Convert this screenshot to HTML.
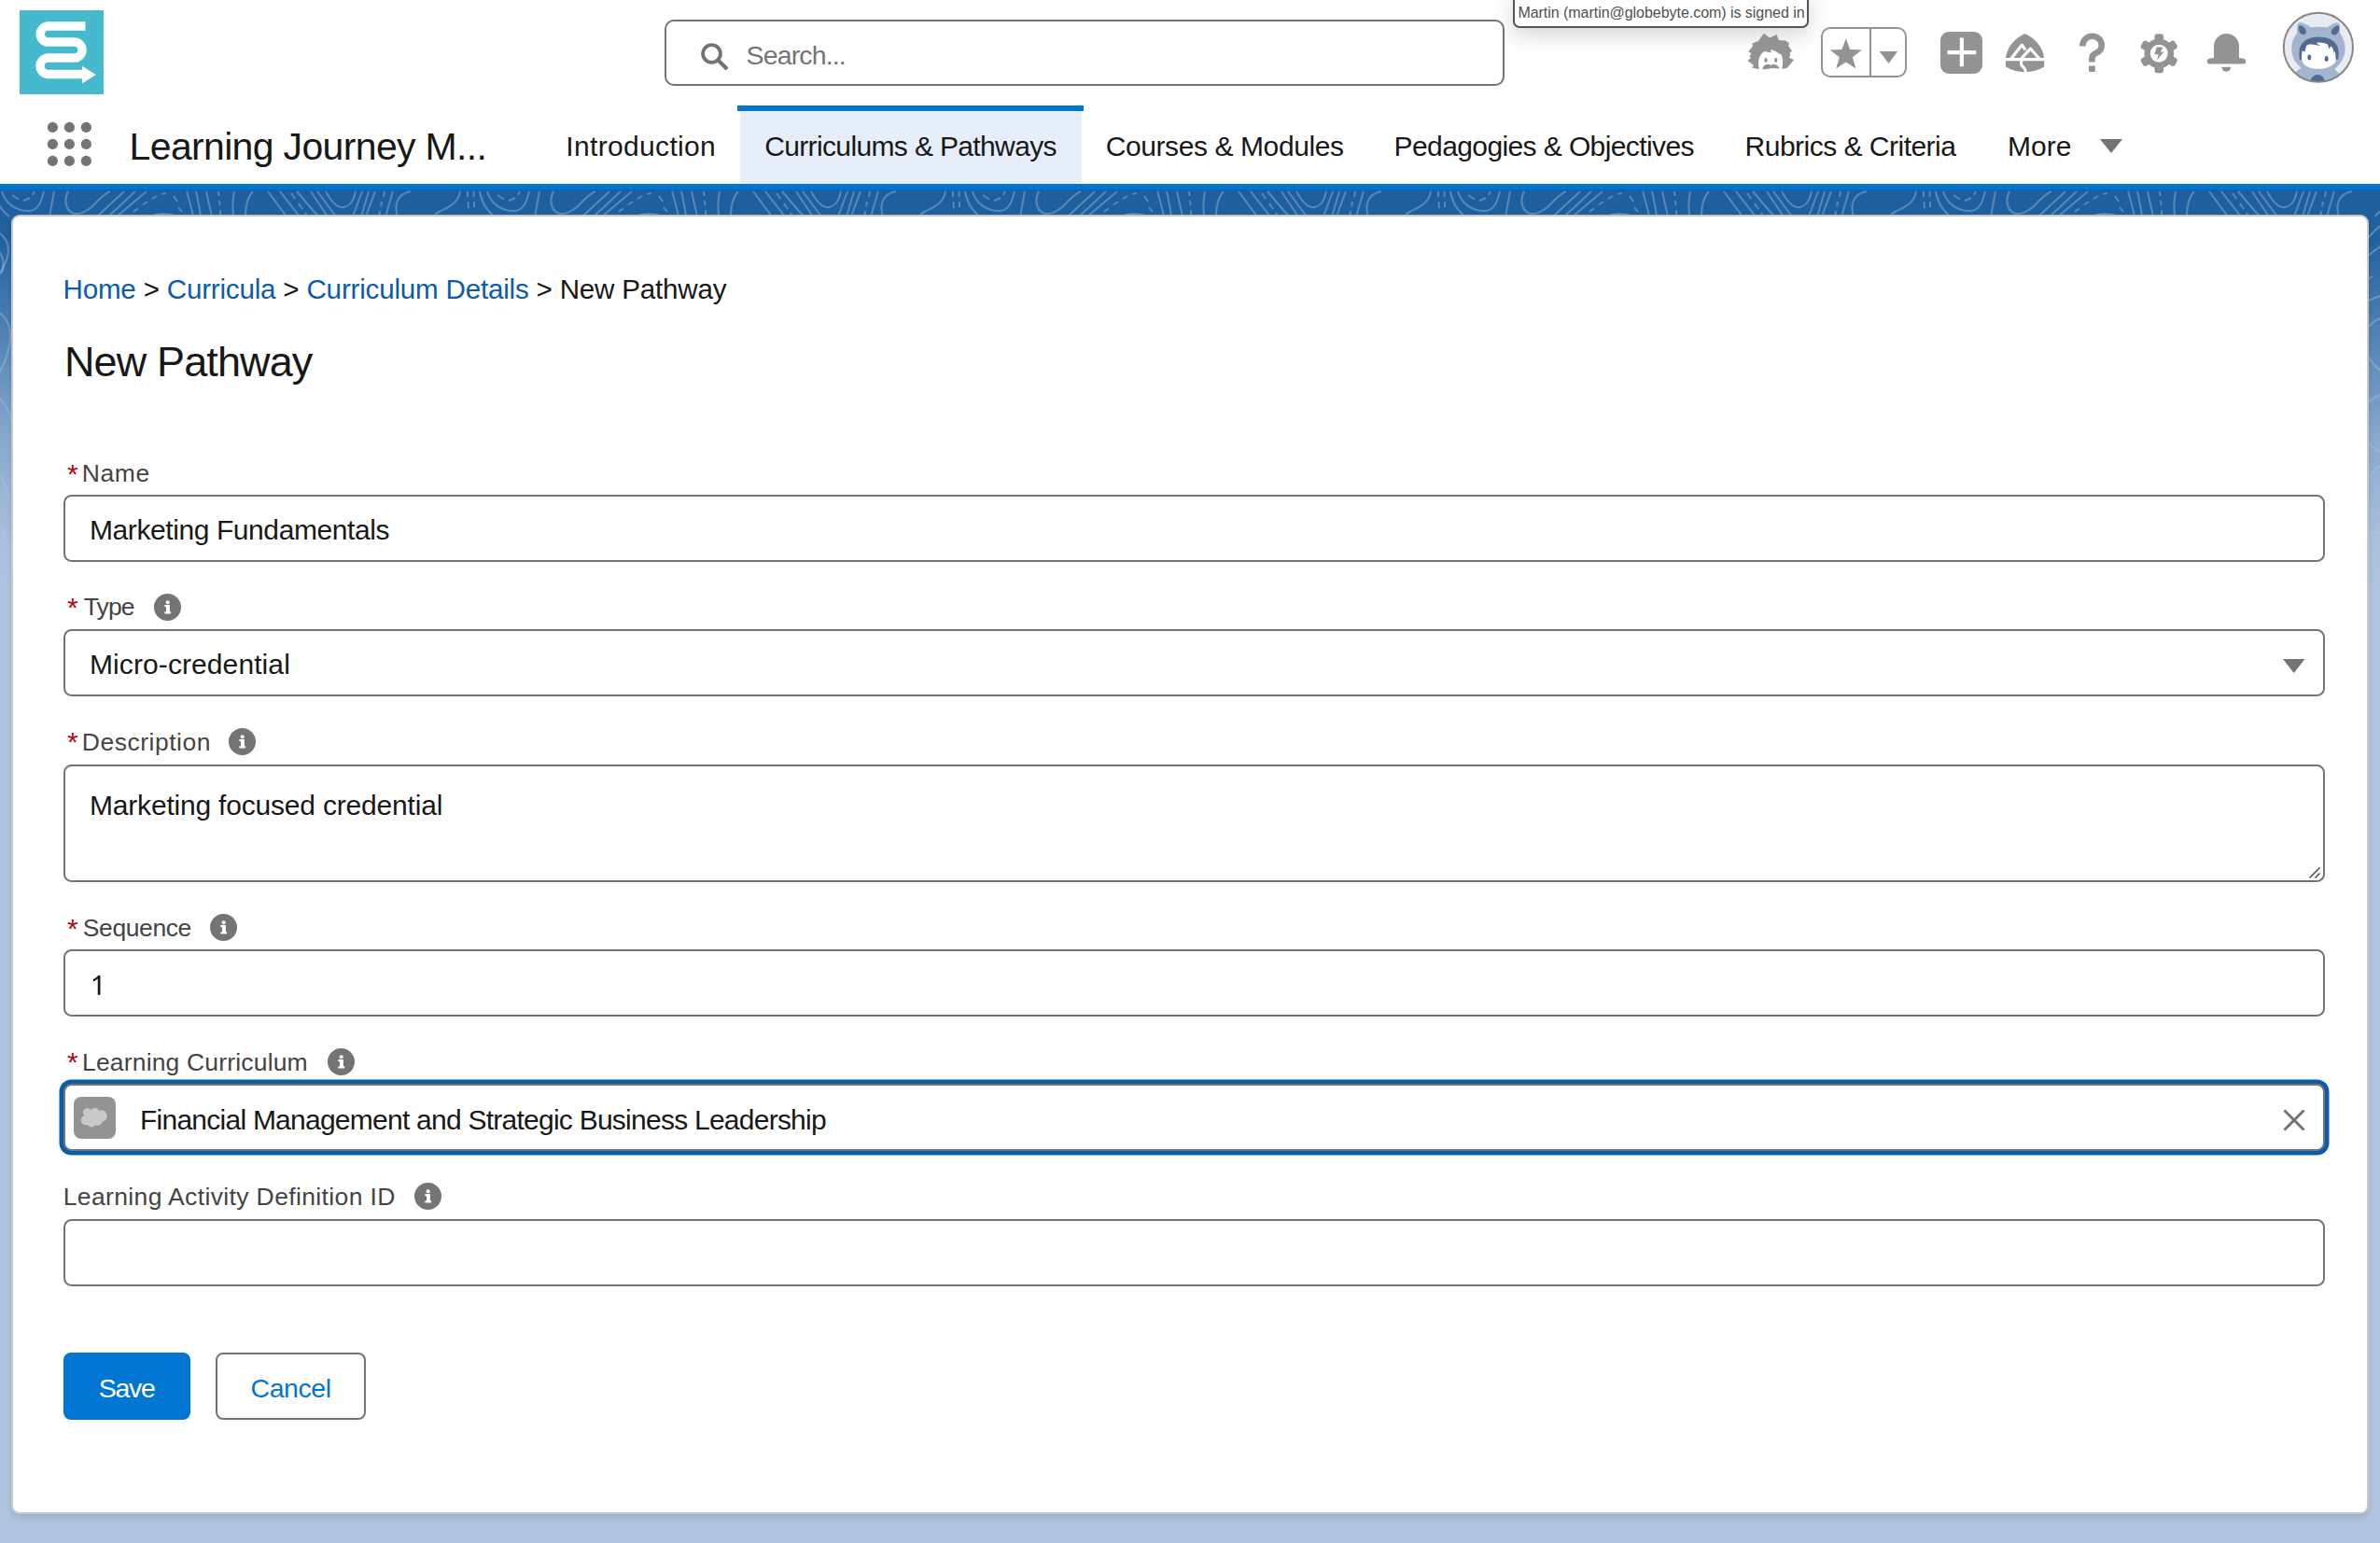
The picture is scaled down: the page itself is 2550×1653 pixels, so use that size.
<!DOCTYPE html>
<html><head><meta charset="utf-8">
<style>
html,body{margin:0;padding:0;width:2550px;height:1653px;overflow:hidden;background:#b0c4df;font-family:"Liberation Sans",sans-serif;position:relative}
.a{position:absolute}
.t{position:absolute;white-space:nowrap;line-height:1}
.lbl{font-size:26.8px;color:#444444}
.req{color:#ba0517;font-size:30px}
.val{font-size:29.3px;color:#181818}
.inp{position:absolute;left:68px;width:2423px;box-sizing:border-box;border:2px solid #747474;border-radius:8.5px;background:#fff}
.tab{font-size:29px;color:#181818}
.info{position:absolute;width:29px;height:29px;border-radius:50%;background:#747474}
.info svg{position:absolute;left:0;top:0}
</style></head><body>
<!-- background band -->
<div class="a" style="left:0;top:203px;width:2550px;height:437px;background:#1d5e9e"></div>
<svg class="a" style="left:0;top:0" width="2550" height="640" viewBox="0 0 2550 640">
<defs>
<pattern id="topo" x="0" y="0" width="520" height="640" patternUnits="userSpaceOnUse">
<g fill="none" stroke="#fff" stroke-opacity="0.26" stroke-width="2">
<path d="M2 205C6 220 20 226 30 226C40 226 44 218 47 205"/>
<path d="M-6 205C-4 218 2 226 10 232M514 205C516 218 522 226 530 232"/>
<path d="M13 209L20 213.5M25 215L32 212M35 209L37 205" />
<path d="M58 205C56 215 55 222 53 232"/>
<path d="M73 205C68 215 70 228 82 229C92 229 100 220 105 215C110 210 115 206 118 205"/>
<path d="M133 205L104 232M145 205L116 232M157 205L125 232"/>
<path d="M143 227L148 223M153 219L158 216M163 213L168 210M173 208L178 207M186 210L190 216M191 222L195 227"/>
<path d="M160 232C170 228 180 228 190 232"/>
<path d="M200 205C203 215 205 222 207 232M210 205C212 215 214 222 215 232M221 205C223 215 225 222 227 232"/>
<path d="M234 205L234.5 210M235 215L235.5 220M236 225L236.5 232" />
<path d="M251 205C249 215 249 222 250 232"/>
<path d="M271 205C264 212 263 222 263 232"/>
<path d="M287 205L307 232M300 205L321 232M318 205L341 232M333 205L351 232M340 205L360 232"/>
<path d="M312 207L316 213M320 218L324 224M327 228L329 232"/>
<path d="M349 205C356 218 362 222 367 222C374 222 379 215 381 205"/>
<path d="M388 205L378 232M395 205L387 232M402 205L392 232M421 205L413 232"/>
<path d="M412 205L411 211M409 216L408 221M407 226L406 232"/>
<path d="M440 205C425 208 422 220 426 232"/>
<path d="M493 205C491 218 480 222 472 226C468 228 466 229 465 232"/>
<path d="M501 205V211M501.5 216L502 223M507.6 205V211M508 216V222"/>
<!-- lower region for side strips -->
<path d="M-10 245C5 250 12 262 8 275C4 290 -5 300 -10 310"/>
<path d="M-10 262C2 268 6 280 2 292"/>
<path d="M-10 330C6 335 14 350 10 370C6 390 0 400 -10 410"/>
<path d="M-10 420C4 428 12 440 14 460"/>
<path d="M452 540C462 548 472 552 485 555M452 575C465 570 475 568 485 570M-10 500C2 510 8 520 10 540M-10 560C4 565 10 575 12 600M452 600C460 608 470 612 485 615M-10 610C2 615 8 625 14 640"/>
<path d="M452 262C460 250 470 240 485 232M452 278C462 270 472 262 480 258M455 300L462 296M452 325C465 318 475 315 485 312M452 360C458 345 470 338 485 340M452 372C462 392 470 400 485 402M450 440C460 425 472 420 485 420M452 470C462 480 470 486 485 488M455 520C460 505 470 495 485 492"/>
</g>
</pattern>
<linearGradient id="fade" x1="0" y1="203" x2="0" y2="640" gradientUnits="userSpaceOnUse">
<stop offset="0" stop-color="#b0c4df" stop-opacity="0"/>
<stop offset="0.12" stop-color="#b0c4df" stop-opacity="0.03"/>
<stop offset="0.35" stop-color="#b0c4df" stop-opacity="0.35"/>
<stop offset="0.6" stop-color="#b0c4df" stop-opacity="0.72"/>
<stop offset="0.85" stop-color="#b0c4df" stop-opacity="0.95"/>
<stop offset="1" stop-color="#b0c4df" stop-opacity="1"/>
</linearGradient>
</defs>
<rect x="0" y="203" width="2550" height="437" fill="url(#topo)"/>
<rect x="0" y="203" width="2550" height="437" fill="url(#fade)"/>
</svg>
<!-- header white -->
<div class="a" style="left:0;top:0;width:2550px;height:197px;background:#fff"></div>
<div class="a" style="left:0;top:197px;width:2550px;height:6px;background:#0176d3"></div>

<!-- card -->
<div class="a" style="left:12px;top:230px;width:2526px;height:1392px;box-sizing:border-box;background:#fff;border:2px solid #c9c9c9;border-radius:9px;box-shadow:0 4px 6px rgba(0,0,0,0.10)"></div>


<!-- ===== HEADER ===== -->
<svg class="a" style="left:21px;top:11px" width="90" height="90" viewBox="0 0 90 90">
<rect width="90" height="90" fill="#45b9cd"/>
<path d="M70.5 17.1H30.75A8.5 8.5 0 0 0 30.75 34.1H58.5A8.5 8.5 0 0 1 58.5 51.1H30.75A8.7 8.7 0 0 0 30.75 68.5H68" fill="none" stroke="#fff" stroke-width="9.5"/>
<path d="M67 59.7L81.8 69.1L67 78.5Z" fill="#fff"/>
</svg>

<div class="a" style="left:712px;top:21px;width:899.5px;height:70.6px;box-sizing:border-box;border:2px solid #747474;border-radius:10px;background:#fff"></div>
<svg class="a" style="left:748px;top:43px" width="36" height="36" viewBox="0 0 36 36">
<circle cx="14.5" cy="14.5" r="9.4" fill="none" stroke="#747474" stroke-width="3.8"/>
<path d="M21 21L31 31" stroke="#747474" stroke-width="4.2" stroke-linecap="butt"/>
</svg>
<div class="t" style="left:799.6px;top:44.9px;font-size:28.5px;letter-spacing:-0.875px;color:#747474">Search...</div>


<!-- tooltip -->
<div class="a" style="left:1621px;top:-12px;width:317px;height:42px;box-sizing:border-box;border:2px solid #555;border-radius:7px;background:#fff;box-shadow:0 8px 22px rgba(0,0,0,0.16)"></div>
<div class="t" style="left:1626.4px;top:5.9px;font-size:16px;letter-spacing:-0.039px;color:#505050">Martin (martin@globebyte.com) is signed in</div>

<!-- einstein -->
<svg class="a" style="left:1870px;top:34px" width="54" height="44" viewBox="0 0 54 44">
<path fill="#939393" d="M14 40L7 38.5L9 36L2.4 31L6 28L4.4 26.5L6.5 23L3.2 21.3L8 15.5L7.2 12.6L14 10L16 7L19.9 1.8L26 6.5L33.5 3L36 9L43 9.5L47 12.2L46 15L49.9 20.5L47.5 23L48.3 24.5L47 28L51.9 30.1L48 35L44.3 38.9L39.1 39.7Z"/>
<path fill="#fff" d="M14.8 40.5C13.5 34 14 28 16.7 24.4C18 22.5 19.5 21.5 20.4 21L22.3 21.6L27.9 22.6L26.9 19.2C30 19.5 34 21.5 36.9 24.1L38.1 23.8C40 27 41 32 39.1 40.5Z"/>
<ellipse cx="22" cy="30.5" rx="1.6" ry="2.4" fill="#939393"/>
<ellipse cx="32.7" cy="30.5" rx="1.6" ry="2.4" fill="#939393"/>
<path fill="#939393" d="M18.5 40.3C18.5 37 21 34.8 24.4 34.7C25.8 34.7 26.8 35.5 27.6 36C28.4 35.3 29 34.7 30.5 34.7C33.5 34.8 36 37 36.3 39.7C33.5 39.3 30.5 38.8 27.6 39.2C24.5 39.6 21.5 40.5 18.5 40.3Z"/>
</svg>

<!-- favorites -->
<div class="a" style="left:1951px;top:29px;width:92px;height:54px;box-sizing:border-box;border:2px solid #939393;border-radius:10px"></div>
<div class="a" style="left:2003px;top:29px;width:2px;height:54px;background:#939393"></div>
<svg class="a" style="left:1955px;top:35px" width="46" height="46" viewBox="0 0 46 46">
<path fill="#939393" d="M22.8 6L27.1 17.9L39.9 18.4L29.8 26.3L33.4 38.6L22.8 31.5L12.2 38.6L15.8 26.3L5.7 18.4L18.5 17.9Z"/>
</svg>
<svg class="a" style="left:2010px;top:52px" width="26" height="20" viewBox="0 0 26 20"><path d="M3.7 3H23.2L13.5 16Z" fill="#939393"/></svg>

<!-- plus -->
<svg class="a" style="left:2079px;top:34px" width="45" height="45" viewBox="0 0 45 45">
<rect width="45" height="45" rx="9" fill="#939393"/>
<path d="M22.9 6.5V37.2M7.6 22.1H38.2" stroke="#fff" stroke-width="4.2"/>
</svg>

<!-- trailhead -->
<svg class="a" style="left:2149px;top:36px" width="42" height="42" viewBox="0 0 42 42">
<path fill="#939393" d="M20.6 0C8 6 1.5 15 0 26H41.2C39.6 15 33 6 20.6 0Z"/>
<path fill="#939393" d="M0 29.3H41.2V35.5C35 39.3 28 41.2 20.6 41.2C13 41.2 6 39.3 0 35.5Z"/>
<path fill="none" stroke="#fff" stroke-width="3.2" stroke-linejoin="round" d="M6 26.5L17.4 12.3L21.3 17.6M16.8 26.5L26.5 16.2L35.8 26.5"/>
<path fill="none" stroke="#fff" stroke-width="3" d="M17.5 28.5C15.5 31.5 16.5 34 19 36C21 37.5 21.6 39 21 42"/>
</svg>

<!-- help -->
<svg class="a" style="left:2225px;top:33px" width="34" height="48" viewBox="0 0 34 48">
<path fill="none" stroke="#939393" stroke-width="6.6" d="M6.3 16.5C6.3 10 11 5.8 16.5 5.8C22.5 5.8 26.8 10 26.8 15.5C26.8 20 24 22.5 20.5 24C17.5 25.3 16.4 27.5 16.4 30V33.6"/>
<rect x="13" y="37.4" width="6.8" height="6.7" rx="1" fill="#939393"/>
</svg>

<!-- gear -->
<svg class="a" style="left:2292px;top:36px" width="42" height="44" viewBox="0 0 42 44">
<g transform="translate(21.25 21.25)" fill="#939393">
<circle r="15.8"/>
<rect x="-4.8" y="-21" width="9.6" height="10" rx="3.2"/>
<rect x="-4.8" y="-21" width="9.6" height="10" rx="3.2" transform="rotate(60)"/>
<rect x="-4.8" y="-21" width="9.6" height="10" rx="3.2" transform="rotate(120)"/>
<rect x="-4.8" y="-21" width="9.6" height="10" rx="3.2" transform="rotate(180)"/>
<rect x="-4.8" y="-21" width="9.6" height="10" rx="3.2" transform="rotate(240)"/>
<rect x="-4.8" y="-21" width="9.6" height="10" rx="3.2" transform="rotate(300)"/>
<circle r="9.4" fill="#fff"/>
<path d="M-2.5 -6.8H4.2L1.6 -1.8H5.2L-2.2 7.2L-0.6 0.9H-5Z"/>
</g>
</svg>

<!-- bell -->
<svg class="a" style="left:2362px;top:33px" width="48" height="48" viewBox="0 0 48 48">
<g transform="translate(-2362 -33)" fill="#939393">
<path d="M2372 62V49.5A13.5 13.5 0 0 1 2399 49.5V62C2399.5 62.2 2401 62.4 2403 62.6C2405.4 62.9 2406.3 64.3 2406.3 65.6C2406.3 67.6 2405.5 68.5 2404 68.5H2367C2365.5 68.5 2364.8 67.6 2364.8 65.6C2364.8 64.3 2365.6 62.9 2368 62.6C2370 62.4 2371.5 62.2 2372 62Z"/>
<path d="M2380.4 71.7H2390.2A4.9 5 0 0 1 2380.4 71.7Z"/>
</g>
</svg>

<!-- avatar -->
<svg class="a" style="left:2444px;top:11px" width="80" height="80" viewBox="2444 11 80 80">
<defs><clipPath id="avc"><circle cx="2483.9" cy="50.75" r="37"/></clipPath></defs>
<circle cx="2483.9" cy="50.75" r="37.2" fill="#e8ecf2"/>
<g clip-path="url(#avc)">
<path fill="#a3b4cf" d="M2465.6 72.7C2458.5 67 2455.3 60 2455.3 52.6C2455.3 45.5 2457.5 40 2461.2 35.5C2461 31 2461 27.5 2462 25.5C2463 24 2465 23.8 2467 24.6C2470 25.8 2473 27.5 2475.7 29.2C2481.5 28.5 2487.5 28.5 2493.5 29.2C2496 27.5 2499.5 25.5 2502.5 24.6C2504.5 24 2506.2 24.5 2506.7 26.5C2507.2 29 2507.2 32 2506.9 35C2510.5 40 2512.7 46 2512.7 52.6C2512.7 60.5 2508.5 68.5 2501.3 74L2506 78.8L2514 91H2453L2459.8 77.1Z"/>
<path fill="#536b90" d="M2463.4 27.5C2465.5 26.5 2468.5 28.5 2470.2 31.5C2471.5 34 2470.8 36.5 2468.5 37C2465.5 37.5 2463.5 35 2463 32C2462.7 30 2462.8 28.2 2463.4 27.5Z"/>
<path fill="#536b90" d="M2505.6 27.8C2503.5 26.8 2500.5 28.8 2498.5 31.8C2497 34.5 2497.8 37 2500.3 37.4C2503.5 37.8 2505.5 35.3 2506 32.3C2506.3 30.2 2506.2 28.5 2505.6 27.8Z"/>
<path fill="#536b90" d="M2464 64.3C2463.2 60 2463.2 55.5 2464 51.5C2466.5 43.5 2474.5 39.5 2484.6 39.5C2494.5 39.5 2502.5 43.5 2505 51.5C2506 55.5 2505.8 60 2505 63.7Z"/>
<path fill="#fff" d="M2466.5 65.4C2465.8 62 2465.8 58.5 2466.8 54.3L2469.5 55.5L2471 49L2474 47.5C2477 47.3 2480 47.8 2483 48.5C2484.5 48.8 2485.8 49 2485.7 48.6C2484 47.5 2482.5 46.5 2481.8 45.9C2485 45 2490 45.5 2494 47.5L2495.3 52.4L2497.4 49.3C2499.5 51 2500.5 54 2500.6 57.2L2501.5 54.5C2502.5 57.5 2503 61.5 2502.4 66C2500 70.5 2493 73.8 2484 73.8C2475 73.8 2468.5 70.5 2466.5 65.4Z"/>
<ellipse cx="2474.3" cy="61.5" rx="1.95" ry="2.9" fill="#536b90"/>
<ellipse cx="2492.7" cy="62.9" rx="1.95" ry="2.9" fill="#536b90"/>
<circle cx="2483.2" cy="87.6" r="7.6" fill="#536b90"/>
</g>
<circle cx="2483.9" cy="50.75" r="37.1" fill="none" stroke="#868686" stroke-width="2"/>
</svg>

<!-- ===== NAV ===== -->
<svg class="a" style="left:45px;top:125px" width="60" height="60" viewBox="0 0 60 60">
<g fill="#747474">
<circle cx="11.4" cy="11.4" r="5.6"/><circle cx="29.4" cy="11.4" r="5.6"/><circle cx="47.4" cy="11.4" r="5.6"/>
<circle cx="11.4" cy="29.4" r="5.6"/><circle cx="29.4" cy="29.4" r="5.6"/><circle cx="47.4" cy="29.4" r="5.6"/>
<circle cx="11.4" cy="47.4" r="5.6"/><circle cx="29.4" cy="47.4" r="5.6"/><circle cx="47.4" cy="47.4" r="5.6"/>
</g></svg>
<div class="t" style="left:138.6px;top:137.0px;font-size:41px;letter-spacing:-0.66px;color:#181818">Learning Journey M...</div>

<div class="a" style="left:793px;top:119px;width:366px;height:78px;background:#e5eef9"></div>
<div class="a" style="left:790px;top:113px;width:371px;height:6px;background:#0176d3"></div>
<div class="t" style="left:606.3px;top:142.0px;font-size:30px;letter-spacing:0.336px;color:#181818">Introduction</div>
<div class="t" style="left:819.2px;top:142.0px;font-size:30px;letter-spacing:-0.638px;color:#181818">Curriculums &amp; Pathways</div>
<div class="t" style="left:1184.7px;top:142.0px;font-size:30px;letter-spacing:-0.406px;color:#181818">Courses &amp; Modules</div>
<div class="t" style="left:1493.6px;top:142.0px;font-size:30px;letter-spacing:-0.605px;color:#181818">Pedagogies &amp; Objectives</div>
<div class="t" style="left:1869.6px;top:142.0px;font-size:30px;letter-spacing:-0.512px;color:#181818">Rubrics &amp; Criteria</div>
<div class="t" style="left:2150.9px;top:142.0px;font-size:30px;letter-spacing:0.067px;color:#181818">More</div>
<svg class="a" style="left:2249px;top:148px" width="26" height="18" viewBox="0 0 26 18"><path d="M1 1H25L13 16Z" fill="#747474"/></svg>

<!-- ===== CONTENT ===== -->
<div class="t" style="left:67.5px;top:294.6px;font-size:29.6px;letter-spacing:-0.204px;color:#181818"><span style="color:#0b5cab">Home</span> &gt; <span style="color:#0b5cab">Curricula</span> &gt; <span style="color:#0b5cab">Curriculum Details</span> &gt; New Pathway</div>
<div class="t" style="left:69.0px;top:364.8px;font-size:45px;letter-spacing:-0.88px;color:#181818">New Pathway</div>

<!-- Name -->
<div class="t req" style="left:72px;top:493.3px">*</div>
<div class="t" style="left:87.8px;top:493.8px;font-size:26.5px;letter-spacing:0.6px;color:#444">Name</div>
<div class="inp" style="top:530px;height:72px"></div>
<div class="t" style="left:96.0px;top:553.2px;font-size:30px;letter-spacing:-0.414px;color:#181818">Marketing Fundamentals</div>

<!-- Type -->
<div class="t req" style="left:72px;top:636.3px">*</div>
<div class="t" style="left:89.8px;top:637.0px;font-size:26.5px;letter-spacing:-0.933px;color:#444">Type</div>
<div class="info" style="left:165px;top:636px"><svg width="29" height="29" viewBox="0 0 29 29"><circle cx="14.7" cy="9.3" r="2.05" fill="#fff"/><path d="M11.4 12.1H16.9V19.3H18.1V21.6H11.4V19.3H13V14.2H11.4Z" fill="#fff"/></svg></div>
<div class="inp" style="top:674px;height:72px"></div>
<div class="t" style="left:96.0px;top:697.2px;font-size:30px;letter-spacing:0.093px;color:#181818">Micro-credential</div>
<svg class="a" style="left:2444px;top:704px" width="28" height="20" viewBox="0 0 28 20"><path d="M2 2H25.5L13.75 17Z" fill="#747474"/></svg>

<!-- Description -->
<div class="t req" style="left:72px;top:780.3px">*</div>
<div class="t" style="left:87.8px;top:782.0px;font-size:26.5px;letter-spacing:0.51px;color:#444">Description</div>
<div class="info" style="left:245.3px;top:780.3px"><svg width="29" height="29" viewBox="0 0 29 29"><circle cx="14.7" cy="9.3" r="2.05" fill="#fff"/><path d="M11.4 12.1H16.9V19.3H18.1V21.6H11.4V19.3H13V14.2H11.4Z" fill="#fff"/></svg></div>
<div class="inp" style="top:819px;height:126px"></div>
<div class="t" style="left:96.0px;top:847.5px;font-size:30px;letter-spacing:-0.193px;color:#181818">Marketing focused credential</div>
<svg class="a" style="left:2472px;top:927px" width="16" height="16" viewBox="0 0 16 16"><path d="M2.5 13.5L13.5 2.5M8.5 13.5L13.5 8.5" stroke="#555" stroke-width="1.6"/></svg>

<!-- Sequence -->
<div class="t req" style="left:72px;top:979.5px">*</div>
<div class="t" style="left:88.8px;top:981.0px;font-size:26.5px;letter-spacing:-0.4px;color:#444">Sequence</div>
<div class="info" style="left:225.2px;top:979px"><svg width="29" height="29" viewBox="0 0 29 29"><circle cx="14.7" cy="9.3" r="2.05" fill="#fff"/><path d="M11.4 12.1H16.9V19.3H18.1V21.6H11.4V19.3H13V14.2H11.4Z" fill="#fff"/></svg></div>
<div class="inp" style="top:1017px;height:72px"></div>
<svg class="a" style="left:96px;top:1042px" width="16" height="26" viewBox="96 1042 16 26"><path d="M106.1 1045V1065.8" stroke="#181818" stroke-width="2.7"/><path d="M100 1051.6C101.5 1050.8 103.5 1049.6 105.2 1048.3L106.6 1047.2L107.2 1045.2L105.8 1044.9C104 1046.6 102.2 1047.8 99.8 1048.9Z" fill="#181818"/></svg>

<!-- Learning Curriculum -->
<div class="t req" style="left:72px;top:1123.2px">*</div>
<div class="t" style="left:88.0px;top:1125.1px;font-size:26.5px;letter-spacing:0.172px;color:#444">Learning Curriculum</div>
<div class="info" style="left:350.5px;top:1123.2px"><svg width="29" height="29" viewBox="0 0 29 29"><circle cx="14.7" cy="9.3" r="2.05" fill="#fff"/><path d="M11.4 12.1H16.9V19.3H18.1V21.6H11.4V19.3H13V14.2H11.4Z" fill="#fff"/></svg></div>
<div class="inp" style="top:1161px;height:72px;box-shadow:0 0 0 4.5px #0b5cab;border-color:#747474"></div>
<div class="a" style="left:79px;top:1174.5px;width:45px;height:45px;border-radius:8px;background:#939393"></div>
<svg class="a" style="left:79px;top:1174.5px" width="45" height="45" viewBox="0 0 45 45">
<g fill="#c9c9c9"><circle cx="14.5" cy="16.8" r="4.6"/><circle cx="22.5" cy="16.5" r="4.6"/><circle cx="29.5" cy="20.5" r="6.3"/><circle cx="13" cy="25" r="5.3"/><circle cx="19" cy="27.6" r="4.8"/><circle cx="25.5" cy="26" r="5"/><ellipse cx="21" cy="22" rx="9" ry="6"/></g>
</svg>
<div class="t" style="left:150.0px;top:1185.2px;font-size:30px;letter-spacing:-0.751px;color:#181818">Financial Management and Strategic Business Leadership</div>
<svg class="a" style="left:2444px;top:1186px" width="28" height="28" viewBox="0 0 28 28"><path d="M3.5 3.5L24.5 24.5M24.5 3.5L3.5 24.5" stroke="#747474" stroke-width="3"/></svg>

<!-- LADI -->
<div class="t" style="left:67.7px;top:1269.4px;font-size:26.5px;letter-spacing:0.367px;color:#444">Learning Activity Definition ID</div>
<div class="info" style="left:444.3px;top:1267px"><svg width="29" height="29" viewBox="0 0 29 29"><circle cx="14.7" cy="9.3" r="2.05" fill="#fff"/><path d="M11.4 12.1H16.9V19.3H18.1V21.6H11.4V19.3H13V14.2H11.4Z" fill="#fff"/></svg></div>
<div class="inp" style="top:1305.5px;height:72px"></div>

<!-- Buttons -->
<div class="a" style="left:68px;top:1449px;width:136px;height:72px;border-radius:8px;background:#0176d3"></div>
<div class="t" style="left:105.7px;top:1473.2px;font-size:28.5px;letter-spacing:-1.233px;color:#fff">Save</div>
<div class="a" style="left:231px;top:1449px;width:161px;height:72px;box-sizing:border-box;border:2px solid #747474;border-radius:8px;background:#fff"></div>
<div class="t" style="left:268.5px;top:1473.2px;font-size:28.5px;letter-spacing:-0.42px;color:#0176d3">Cancel</div>

</body></html>
